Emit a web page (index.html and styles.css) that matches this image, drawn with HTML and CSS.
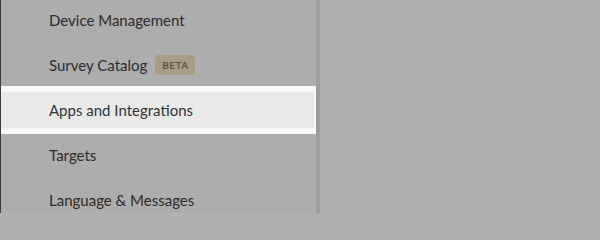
FILE: index.html
```html
<!DOCTYPE html>
<html>
<head>
<meta charset="utf-8">
<link rel="stylesheet" href="styles.css">
</head>
<body>
<div class="app">
  <aside class="sidebar">
    <nav class="nav">
      <div class="item">Device Management</div>
      <div class="item">Survey Catalog <span class="badge">BETA</span></div>
      <div class="spot"><div class="item active">Apps and Integrations</div></div>
      <div class="item">Targets</div>
      <div class="item">Language &amp; Messages</div>
    </nav>
  </aside>
  <div class="divider"></div>
  <main class="content"></main>
</div>
</body>
</html>
```

FILE: styles.css
```css
html, body {
  margin: 0;
  padding: 0;
  height: 213px;
  overflow: hidden;
}
body {
  font-family: Lato, "Open Sans", "Liberation Sans", sans-serif;
  background: #b0b0b0;
}
.app {
  display: flex;
  height: 213px;
}
.sidebar {
  width: 315px;
  background: #adadad;
  border-left: 1px solid #3a3a3a;
  flex: none;
}
.nav {
  display: flex;
  flex-direction: column;
  gap: 9px;
  padding-top: 2px;
}
.spot {
  background: #f9f9f9;
  margin: -6px 0 -6px 0;
  padding: 6px 2px 6px 0;
  position: relative;
  z-index: 1;
}
.item {
  height: 36px;
  display: flex;
  align-items: center;
  padding-left: 48px;
  font-size: 15px;
  color: #2c2c2c;
}
.item.active {
  background: #e9e9e9;
  color: #333333;
}
.badge {
  margin-left: 8px;
  height: 20px;
  padding: 0 7px;
  display: inline-flex;
  align-items: center;
  background: #ab9c85;
  border-radius: 3px;
  font-size: 10px;
  font-weight: 700;
  letter-spacing: 0.4px;
  color: #5b5347;
}
.divider {
  width: 4px;
  background: #9d9d9d;
  flex: none;
}
.content {
  flex: 1;
  background: #b0b0b0;
}
```
